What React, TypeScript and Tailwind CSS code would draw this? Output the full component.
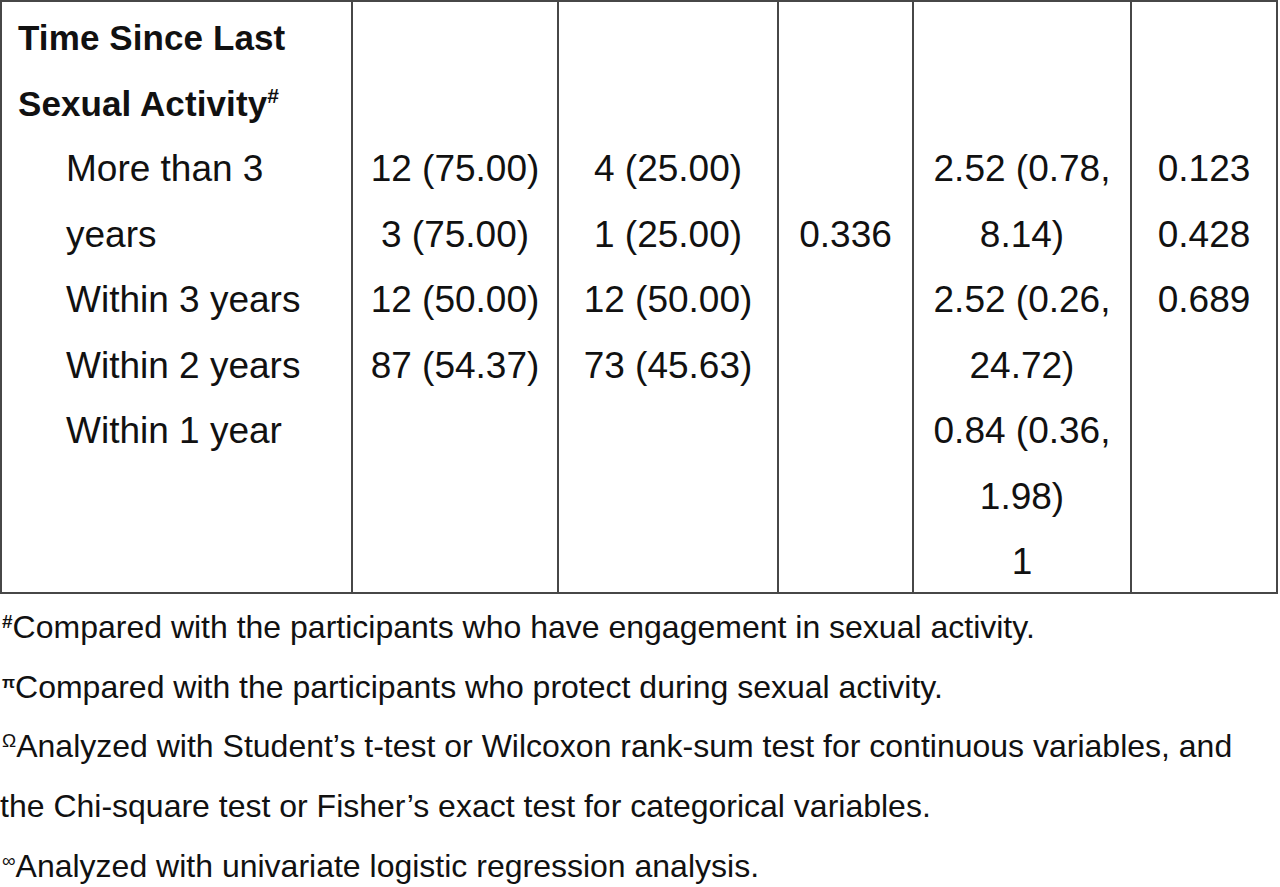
const font = { fontFamily: '"Liberation Sans", Arial, sans-serif' };

type Line = string | null;

function Column({ lines, className }: { lines: Line[]; className: string }) {
  return (
    <div className={className}>
      {lines.map((l, i) => (
        <div key={i} className="h-[65.5px] leading-[65.5px] whitespace-nowrap">
          {l ?? "\u00a0"}
        </div>
      ))}
    </div>
  );
}

const colN = [null, null, "12 (75.00)", "3 (75.00)", "12 (50.00)", "87 (54.37)"];
const colPct = [null, null, "4 (25.00)", "1 (25.00)", "12 (50.00)", "73 (45.63)"];
const colP = [null, null, null, "0.336"];
const colOr = [
  null,
  null,
  "2.52 (0.78,",
  "8.14)",
  "2.52 (0.26,",
  "24.72)",
  "0.84 (0.36,",
  "1.98)",
  "1",
];
const colP2 = [null, null, "0.123", "0.428", "0.689"];

const notes: { mark: string; text: string; markClass: string }[] = [
  { mark: "#", text: "Compared with the participants who have engagement in sexual activity.", markClass: "text-[19px] font-bold" },
  { mark: "π", text: "Compared with the participants who protect during sexual activity.", markClass: "text-[17px] font-bold" },
  { mark: "Ω", text: "Analyzed with Student’s t-test or Wilcoxon rank-sum test for continuous variables, and", markClass: "text-[19px]" },
  { mark: "", text: "the Chi-square test or Fisher’s exact test for categorical variables.", markClass: "" },
  { mark: "∞", text: "Analyzed with univariate logistic regression analysis.", markClass: "text-[19px]" },
];

export default function App() {
  return (
    <div className="w-[1280px] h-[887px] bg-white text-[#111] overflow-hidden" style={font}>
      <div className="w-[1278px] flex border-2 border-[#474747] text-[37px] pt-[3px] h-[594px]">
        {/* variable */}
        <div className="w-[349px] pl-[16px]">
          <div className="h-[65.5px] leading-[65.5px] font-bold text-[35px] tracking-[0.1px] whitespace-nowrap">
            Time Since Last
          </div>
          <div className="h-[65.5px] leading-[65.5px] font-bold text-[35px] tracking-[0.1px] whitespace-nowrap">
            Sexual Activity<sup className="text-[21px] relative -top-[13px]">#</sup>
          </div>
          <div className="pl-[48px]">
            {["More than 3", "years", "Within 3 years", "Within 2 years", "Within 1 year"].map((t) => (
              <div key={t} className="h-[65.5px] leading-[65.5px] whitespace-nowrap">
                {t}
              </div>
            ))}
          </div>
        </div>
        <Column lines={colN} className="w-[206px] border-l-2 border-[#474747] -mt-[3px] pt-[3px] text-center" />
        <Column lines={colPct} className="w-[220px] border-l-2 border-[#474747] -mt-[3px] pt-[3px] text-center" />
        <Column lines={colP} className="w-[135px] border-l-2 border-[#474747] -mt-[3px] pt-[3px] text-center" />
        <Column lines={colOr} className="w-[218px] border-l-2 border-[#474747] -mt-[3px] pt-[3px] text-center" />
        <Column lines={colP2} className="flex-1 border-l-2 border-[#474747] -mt-[3px] pt-[3px] text-center" />
      </div>
      <div className="pt-[4px] text-[32px]">
        {notes.map((n, i) => (
          <div key={i} className="h-[59.7px] leading-[59.7px] whitespace-nowrap">
            {n.mark && <sup className={`${n.markClass} relative -top-[10px] pl-[2px]`}>{n.mark}</sup>}
            {n.text}
          </div>
        ))}
      </div>
    </div>
  );
}
